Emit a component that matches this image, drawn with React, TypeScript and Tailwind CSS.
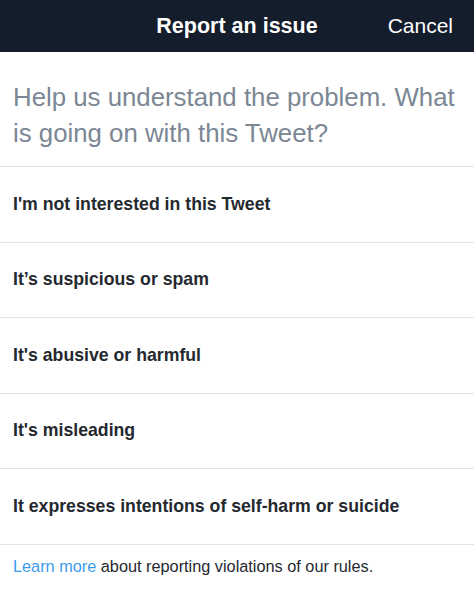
const reasons = [
  "I'm not interested in this Tweet",
  "It\u2019s suspicious or spam",
  "It's abusive or harmful",
  "It's misleading",
  "It expresses intentions of self-harm or suicide",
];

export default function App() {
  return (
    <div className="w-[474px] h-[594px] bg-white font-['Liberation_Sans',Arial,sans-serif] overflow-hidden">
      <header className="relative h-[52px] bg-[#141d2b] flex items-center justify-center">
        <h1 className="text-white text-[21.5px] font-bold">Report an issue</h1>
        <button className="absolute right-[21px] top-1/2 -translate-y-1/2 text-white text-[21px]">
          Cancel
        </button>
      </header>

      <div className="px-[13px] pt-[27px] pb-[15px] border-b border-[#e1e3e6]">
        <p className="text-[25.8px] leading-[36px] text-[#7b8794]">
          Help us understand the problem. What is going on with this Tweet?
        </p>
      </div>

      {reasons.map((r) => (
        <div
          key={r}
          className="h-[75.5px] px-[13px] flex items-center border-b border-[#e1e3e6]"
        >
          <span className="text-[17.7px] font-bold text-[#24292f]">{r}</span>
        </div>
      ))}

      <p className="px-[13px] pt-[9px] text-[16.3px] text-[#24292f]">
        <span className="text-[#3d9be9]">Learn more</span> about reporting
        violations of our rules.
      </p>
    </div>
  );
}
